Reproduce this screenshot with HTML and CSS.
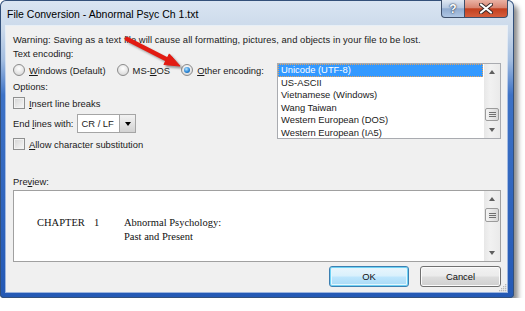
FILE: index.html
```html
<!DOCTYPE html>
<html lang="en">
<head>
    <meta charset="UTF-8">
    <title>File Conversion</title>
    <link rel="stylesheet" href="styles.css">
</head>
<body>

<div class="window">
    <div class="titlebar">
        <span class="title">File Conversion - Abnormal Psyc Ch 1.txt</span>
        <div class="caption-buttons">
            <div class="cap-btn help">?</div>
            <div class="cap-btn close">
                <svg width="14" height="11" viewBox="0 0 14 11">
                    <path d="M2 1.5 L12 9.5 M12 1.5 L2 9.5" stroke="#3a2a2a" stroke-width="4" stroke-linecap="round"/>
                    <path d="M2 1.5 L12 9.5 M12 1.5 L2 9.5" stroke="#fff" stroke-width="2.2" stroke-linecap="round"/>
                </svg>
            </div>
        </div>
    </div>

    <div class="client">
        <p class="line warning">Warning: Saving as a text file will cause all formatting, pictures, and objects in your file to be lost.</p>
        <p class="line encoding-label">Text encoding:</p>

        <div class="encoding-row">
            <div class="left-col">
                <div class="radios">
                    <div class="radio"><span class="dot"></span><span><u>W</u>indows (Default)</span></div>
                    <div class="radio"><span class="dot"></span><span>MS-<u>D</u>OS</span></div>
                    <div class="radio"><span class="dot on"></span><span><u>O</u>ther encoding:</span></div>
                </div>
                <p class="line options-label">Options:</p>
                <div class="check first"><span class="box"></span><span><u>I</u>nsert line breaks</span></div>
                <div class="endlines">
                    <span>End <u>l</u>ines with:</span>
                    <div class="select">
                        <span class="select-text">CR / LF</span>
                        <span class="select-btn"><span class="tri-down dark"></span></span>
                    </div>
                </div>
                <div class="check"><span class="box"></span><span><u>A</u>llow character substitution</span></div>
            </div>

            <div class="listbox">
                <ul class="items">
                    <li class="selected">Unicode (UTF-8)</li>
                    <li>US-ASCII</li>
                    <li>Vietnamese (Windows)</li>
                    <li>Wang Taiwan</li>
                    <li>Western European (DOS)</li>
                    <li>Western European (IA5)</li>
                </ul>
                <div class="scrollbar list-scroll">
                    <div class="arrow-btn"><span class="tri-up"></span></div>
                    <div class="track"><div class="thumb"><span></span><span></span><span></span></div></div>
                    <div class="arrow-btn"><span class="tri-down"></span></div>
                </div>
            </div>
        </div>

        <p class="line preview-label">Pre<u>v</u>iew:</p>
        <div class="preview">
            <div class="doc">
                <div class="doc-line"><span class="chap">CHAPTER</span><span class="num">1</span><span>Abnormal Psychology:</span></div>
                <div class="doc-line"><span class="chap"></span><span class="num"></span><span>Past and Present</span></div>
            </div>
            <div class="scrollbar preview-scroll">
                <div class="arrow-btn"><span class="tri-up"></span></div>
                <div class="track"><div class="thumb"><span></span><span></span><span></span></div></div>
                <div class="arrow-btn"><span class="tri-down"></span></div>
            </div>
        </div>

        <div class="buttons">
            <button class="btn ok">OK</button>
            <button class="btn">Cancel</button>
        </div>

        <svg class="grip" width="9" height="9" viewBox="0 0 9 9">
            <g fill="#b8b8b8">
                <rect x="7" y="1" width="1.3" height="1.3"/>
                <rect x="5" y="3" width="1.3" height="1.3"/><rect x="7" y="3" width="1.3" height="1.3"/>
                <rect x="3" y="5" width="1.3" height="1.3"/><rect x="5" y="5" width="1.3" height="1.3"/><rect x="7" y="5" width="1.3" height="1.3"/>
                <rect x="1" y="7" width="1.3" height="1.3"/><rect x="3" y="7" width="1.3" height="1.3"/><rect x="5" y="7" width="1.3" height="1.3"/><rect x="7" y="7" width="1.3" height="1.3"/>
            </g>
        </svg>
    </div>

    <!-- callout arrow pointing at "Other encoding" -->
    <svg class="callout" width="200" height="80" viewBox="0 0 200 80">
        <defs>
            <filter id="soft" x="-20%" y="-20%" width="140%" height="140%">
                <feGaussianBlur stdDeviation="1.2"/>
            </filter>
        </defs>
        <g transform="translate(2,2)" fill="rgba(0,0,0,0.35)" stroke="rgba(0,0,0,0.35)" filter="url(#soft)">
            <line x1="127" y1="39" x2="167" y2="59.5" stroke-width="4.5"/>
            <polygon points="180,66 163.9,64.5 169.3,53.9" stroke-width="1"/>
        </g>
        <line x1="127" y1="39" x2="167" y2="59.5" stroke="#e21b12" stroke-width="4.5" stroke-linecap="round"/>
        <polygon points="180,66 163.9,64.5 169.3,53.9" fill="#e21b12" stroke="#e21b12" stroke-width="1" stroke-linejoin="round"/>
    </svg>
</div>

</body>
</html>
```

FILE: styles.css
```css
body {
    margin: 0;
    background: #fff;
    font-family: "Liberation Sans", Arial, sans-serif;
    font-size: 9.4px;
    color: #1a1a1a;
}

p {
    margin: 0;
}

.window {
    position: relative;
    width: 514px;
    height: 298px;
    box-sizing: border-box;
    display: flex;
    flex-direction: column;
    padding-bottom: 6px;
    border-radius: 6px 6px 4px 4px;
    background: linear-gradient(#dae5f2 0, #cbd9ea 30px, #a3bde0 60px, #3d72c6 95px, #2459b5 100%);
    box-shadow: inset 0 0 0 1px #33507a, 4px 5px 5px rgba(0, 0, 0, 0.45);
}

/* title bar */
.titlebar {
    height: 26px;
    display: flex;
    justify-content: space-between;
    padding: 0 6px 0 7px;
}

.title {
    font-size: 10.5px;
    line-height: 28px;
    color: #000;
}

.caption-buttons {
    display: flex;
    align-self: flex-start;
}

.cap-btn {
    height: 18px;
    box-sizing: border-box;
    display: flex;
    align-items: center;
    justify-content: center;
    border: 1px solid #3e4f6a;
    border-top: none;
}

.help {
    width: 24px;
    border-radius: 0 0 0 4px;
    background: linear-gradient(#e0e8f2, #b7c9e1 45%, #90abcf 52%, #afc6e4);
    color: #fff;
    font-weight: bold;
    font-size: 12px;
    text-shadow: 0 0 2px #24344f, 0 0 1px #24344f;
}

.close {
    width: 43px;
    border-left: none;
    border-radius: 0 0 4px 0;
    background: linear-gradient(#eab2a4, #d98571 45%, #c2401f 52%, #d65d3c);
}

/* client area */
.client {
    position: relative;
    flex: 1;
    margin: 0 7px 0 6px;
    padding: 8px 6px 0 7px;
    background: #f0f0f0;
    box-shadow: 0 0 0 1px rgba(255, 255, 255, 0.55);
}

.line {
    line-height: 12px;
    white-space: nowrap;
}

.warning {
    letter-spacing: 0.07px;
}

.encoding-label {
    margin-top: 2px;
}

.encoding-row {
    display: flex;
    justify-content: space-between;
    margin-top: 3px;
}

.left-col {
    width: 264px;
}

.radios {
    display: flex;
    gap: 11px;
    padding-top: 1px;
    height: 12px;
}

.radio, .check {
    display: flex;
    align-items: center;
    gap: 4px;
    height: 12px;
    white-space: nowrap;
}

.dot {
    position: relative;
    width: 12px;
    height: 12px;
    box-sizing: border-box;
    border-radius: 50%;
    border: 1px solid #8b8b8b;
    background: radial-gradient(circle at 50% 35%, #ffffff, #e6e6e6 55%, #cfcfcf);
}

.dot.on::after {
    content: "";
    position: absolute;
    left: 2px;
    top: 2px;
    width: 6px;
    height: 6px;
    border-radius: 50%;
    background: radial-gradient(circle at 40% 35%, #b8e6ff, #2a86d6 55%, #0c4d93);
}

.options-label {
    margin-top: 5px;
}

.check {
    margin-top: 5px;
}

.check.first {
    margin-top: 4px;
}

.box {
    width: 12px;
    height: 12px;
    box-sizing: border-box;
    border: 1px solid #8e8f8f;
    background: linear-gradient(135deg, #d4d4d4, #f8f8f8);
    box-shadow: inset 0 0 0 1px #f2f2f2;
}

.endlines {
    display: flex;
    align-items: center;
    gap: 4px;
    margin-top: 5px;
    height: 19px;
}

.select {
    width: 59px;
    height: 19px;
    box-sizing: border-box;
    display: flex;
    justify-content: space-between;
    border: 1px solid #a5a5a5;
    background: #fff;
}

.select-text {
    line-height: 17px;
    padding-left: 3px;
}

.select-btn {
    width: 15px;
    display: flex;
    align-items: center;
    justify-content: center;
    border-left: 1px solid #a5a5a5;
    background: linear-gradient(#f2f2f2, #e3e3e3 50%, #d2d2d2);
}

/* list box */
.listbox {
    width: 224px;
    height: 76px;
    box-sizing: border-box;
    display: flex;
    border: 1px solid #a9abb0;
    background: #fff;
}

.items {
    flex: 1;
    margin: 0;
    padding: 0 1px 0 0;
    list-style: none;
}

.items li {
    height: 12.6px;
    line-height: 12.6px;
    padding-left: 3px;
    white-space: nowrap;
}

.items li.selected {
    box-sizing: border-box;
    background: #3399ff;
    color: #fff;
    border: 1px dotted #e3a35f;
    padding-left: 2px;
    line-height: 10.6px;
}

.scrollbar {
    width: 16px;
    display: flex;
    flex-direction: column;
    background: linear-gradient(90deg, #e7e7e7, #f1f1f1 40%, #eaeaea);
}

.arrow-btn {
    height: 16px;
    display: flex;
    align-items: center;
    justify-content: center;
}

.track {
    flex: 1;
}

.list-scroll .thumb {
    margin-top: 28px;
    height: 13px;
}

.preview-scroll .thumb {
    margin-top: 1px;
    height: 14px;
}

.thumb {
    box-sizing: border-box;
    margin: 0 1px;
    border: 1px solid #9b9b9b;
    border-radius: 2px;
    background: linear-gradient(90deg, #f3f3f3, #e6e6e6 50%, #d9d9d9);
    display: flex;
    flex-direction: column;
    align-items: center;
    justify-content: center;
    gap: 1px;
}

.thumb span {
    width: 7px;
    height: 1px;
    background: #707070;
}

.tri-up {
    width: 0;
    height: 0;
    border-left: 3.5px solid transparent;
    border-right: 3.5px solid transparent;
    border-bottom: 4px solid #5f5f5f;
}

.tri-down {
    width: 0;
    height: 0;
    border-left: 3.5px solid transparent;
    border-right: 3.5px solid transparent;
    border-top: 4px solid #5f5f5f;
}

.tri-down.dark {
    border-top-color: #000;
}

/* preview */
.preview-label {
    margin-top: 26px;
}

.preview {
    margin-top: 2px;
    height: 72px;
    box-sizing: border-box;
    display: flex;
    border: 1px solid #a0a0a0;
    background: #fff;
}

.doc {
    flex: 1;
    padding: 25px 0 0 23px;
    font-family: "Liberation Serif", "Times New Roman", serif;
    font-size: 10.5px;
    color: #111;
}

.doc-line {
    display: flex;
    line-height: 14px;
}

.chap {
    width: 57px;
}

.num {
    width: 30px;
}

/* buttons */
.buttons {
    display: flex;
    justify-content: flex-end;
    gap: 11px;
    margin-top: 4px;
}

.btn {
    width: 81px;
    height: 21px;
    padding: 0;
    font-family: inherit;
    font-size: 9.4px;
    color: #111;
    border: 1px solid #707070;
    border-radius: 3px;
    background: linear-gradient(#f2f2f2, #ebebeb 48%, #dddddd 52%, #cfcfcf);
    box-shadow: inset 0 0 0 1px #fbfbfb;
}

.btn.ok {
    width: 80px;
    border-color: #3c7fb1;
    background: linear-gradient(#eaf6fd, #d9f0fc 48%, #bee6fd 52%, #a7d9f5);
    box-shadow: inset 0 0 0 1px #6fd2f5, inset 0 0 0 2px #e4f6fd;
}

.grip {
    position: absolute;
    right: 0;
    bottom: 0;
}

.callout {
    position: absolute;
    left: 0;
    top: 0;
    pointer-events: none;
}
```
